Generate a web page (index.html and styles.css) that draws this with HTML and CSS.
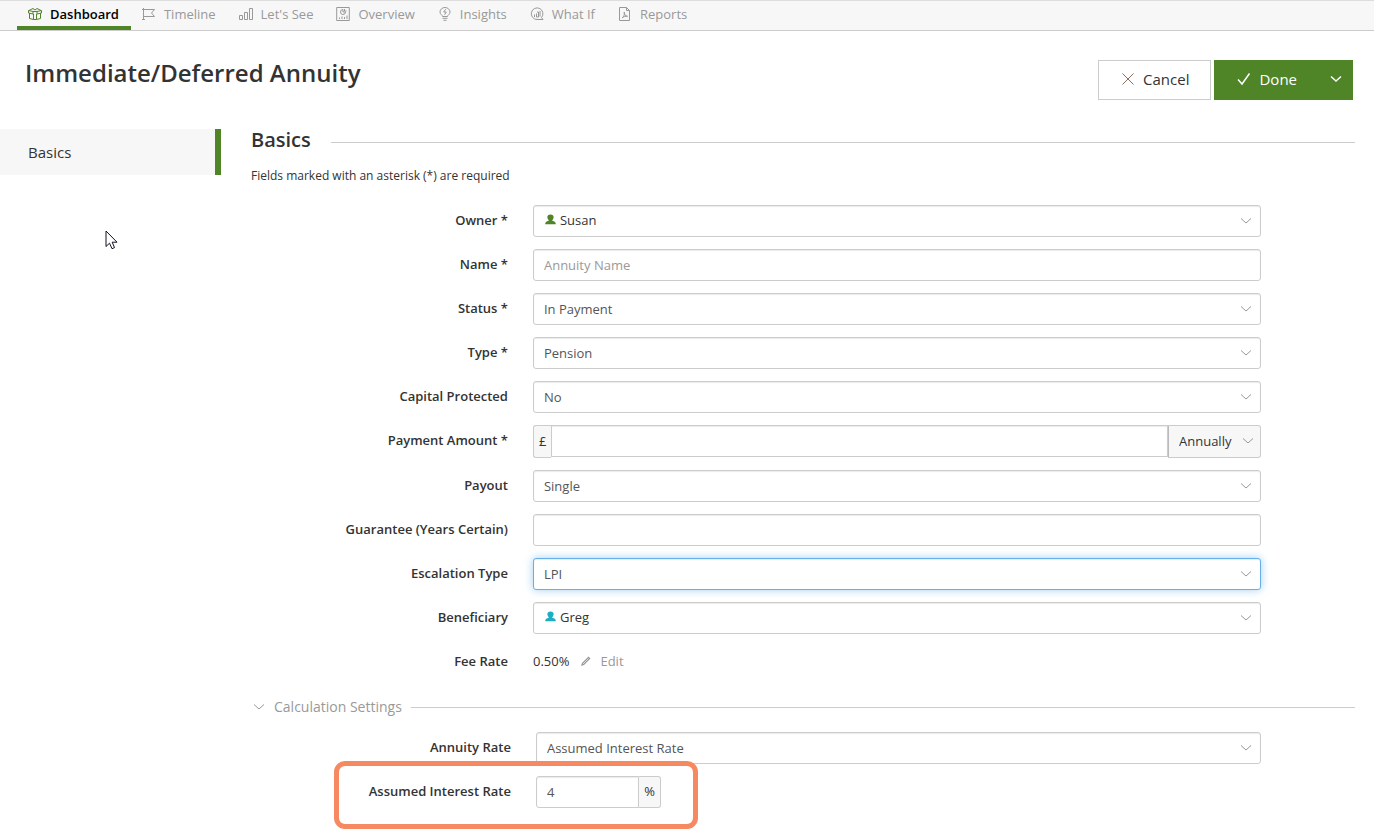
FILE: index.html
```html
<!DOCTYPE html>
<html lang="en">
<head>
    <meta charset="UTF-8">
    <meta name="viewport" content="width=device-width, initial-scale=1.0">
    <title>Immediate/Deferred Annuity</title>
    <link rel="stylesheet" href="styles.css">
</head>
<body>
    <svg class="sprite" aria-hidden="true">
        <symbol id="chevron" viewBox="0 0 12 8">
            <path d="M1 1.5 L6 6 L11 1.5"/>
        </symbol>
        <symbol id="person" viewBox="0 0 12 12">
            <path d="M6 0.5 C3.8 0.5 2.6 1.8 2.6 3.4 C2.6 4.8 3.2 6 4 6.6 V7.4 L1.8 8.1 C0.9 8.5 0.2 9.6 0.2 11.2 H11.8 C11.8 9.6 11.1 8.5 10.2 8.1 L8 7.4 V6.6 C8.8 6 9.4 4.8 9.4 3.4 C9.4 1.8 8.2 0.5 6 0.5 Z"/>
        </symbol>
    </svg>

    <nav class="tabs">
        <a href="#" class="tab active">
            <svg class="icon" viewBox="0 0 14 14"><path d="M1.5 6 V11.5 L5.5 12.5 H8.5 L12.5 11.5 V6 M0.5 3.5 L5 4.5 V7 L0.5 6 Z M13.5 3.5 L9 4.5 V7 L13.5 6 Z M5 4.5 H9 M5.5 7 V12.5 M8.5 7 V12.5 M1 3.5 L5 1.5 L7 3 L9 1.5 L13 3.5"/></svg>
            <span>Dashboard</span>
        </a>
        <a href="#" class="tab">
            <svg class="icon" viewBox="0 0 14 14"><path d="M1.5 1 V13 M0 2.5 H12.5 L9.5 6 L12.5 9.5 H1.5 M0 12.5 H3"/></svg>
            <span>Timeline</span>
        </a>
        <a href="#" class="tab">
            <svg class="icon" viewBox="0 0 14 14"><path d="M0.5 8.5 H3.5 V12.5 H0.5 Z M5.5 5.5 H8.5 V12.5 H5.5 Z M10.5 1.5 H13.5 V12.5 H10.5 Z"/></svg>
            <span>Let's See</span>
        </a>
        <a href="#" class="tab">
            <svg class="icon" viewBox="0 0 14 14"><path d="M0.7 0.5 H13.3 V13.5 H0.7 Z M7 2.5 A2.5 2.5 0 1 0 9.5 5 H7 Z M8.5 2 V4 H10.5 M3.5 10.5 V12 M6 9.5 V12 M8.5 10 V12 M11 8.5 V12"/></svg>
            <span>Overview</span>
        </a>
        <a href="#" class="tab">
            <svg class="icon" viewBox="0 0 14 14"><path d="M4.5 9.5 C4.5 8 2 7.5 2 5 A5 4.5 0 0 1 12 5 C12 7.5 9.5 8 9.5 9.5 Z M4.5 11.3 H9.5 M5.5 13.3 H8.5 M7.7 2.2 L5.7 5 H8.3 L6.5 7.8"/></svg>
            <span>Insights</span>
        </a>
        <a href="#" class="tab">
            <svg class="icon" viewBox="0 0 14 14"><path d="M7 12.5 A5.8 5.8 0 1 1 11.5 10.5 L13 12.5 Z M4.5 7.5 V10 M6.5 6.5 V10 H8.5 V5 H7 M10 4 V9.5"/></svg>
            <span>What If</span>
        </a>
        <a href="#" class="tab">
            <svg class="icon" viewBox="0 0 14 14"><path d="M1.5 0.5 H8.5 L11.5 3.5 V13.5 H1.5 Z M8.5 0.5 V3.5 H11.5 M4 11 C6 9.5 7 7 6.3 5 C5.5 7 7.5 9 9.5 9.3 C7.5 9 5 9.8 4 11"/></svg>
            <span>Reports</span>
        </a>
    </nav>

    <header class="page-header">
        <h1>Immediate/Deferred Annuity</h1>
        <div class="actions">
            <button type="button" class="btn cancel">
                <svg class="icon" viewBox="0 0 14 14"><path d="M1.5 1.5 L12.5 12.5 M12.5 1.5 L1.5 12.5"/></svg>
                <span>Cancel</span>
            </button>
            <div class="split">
                <button type="button" class="btn done">
                    <svg class="icon" viewBox="0 0 14 14"><path d="M1 7.5 L5 12 L12.5 1.5"/></svg>
                    <span>Done</span>
                </button>
                <button type="button" class="btn more" aria-label="More options">
                    <svg class="chevron"><use href="#chevron"/></svg>
                </button>
            </div>
        </div>
    </header>

    <div class="layout">
        <aside class="sidebar">
            <a href="#basics" class="side-link">Basics</a>
        </aside>

        <main class="content" id="basics">
            <h2 class="section-title">Basics</h2>
            <p class="hint">Fields marked with an asterisk (*) are required</p>

            <form class="form">
                <div class="row">
                    <label for="owner">Owner *</label>
                    <div class="control">
                        <select id="owner" class="field with-person"><option>Susan</option></select>
                        <svg class="person green"><use href="#person"/></svg>
                        <svg class="chevron"><use href="#chevron"/></svg>
                    </div>
                </div>
                <div class="row">
                    <label for="name">Name *</label>
                    <div class="control">
                        <input id="name" class="field" type="text" placeholder="Annuity Name">
                    </div>
                </div>
                <div class="row">
                    <label for="status">Status *</label>
                    <div class="control">
                        <select id="status" class="field"><option>In Payment</option></select>
                        <svg class="chevron"><use href="#chevron"/></svg>
                    </div>
                </div>
                <div class="row">
                    <label for="type">Type *</label>
                    <div class="control">
                        <select id="type" class="field"><option>Pension</option></select>
                        <svg class="chevron"><use href="#chevron"/></svg>
                    </div>
                </div>
                <div class="row">
                    <label for="capital">Capital Protected</label>
                    <div class="control">
                        <select id="capital" class="field"><option>No</option></select>
                        <svg class="chevron"><use href="#chevron"/></svg>
                    </div>
                </div>
                <div class="row">
                    <label for="amount">Payment Amount *</label>
                    <div class="control group amount">
                        <span class="addon before">£</span>
                        <input id="amount" class="field" type="text">
                        <div class="frequency">
                            <select class="field" aria-label="Payment frequency"><option>Annually</option></select>
                            <svg class="chevron"><use href="#chevron"/></svg>
                        </div>
                    </div>
                </div>
                <div class="row">
                    <label for="payout">Payout</label>
                    <div class="control">
                        <select id="payout" class="field"><option>Single</option></select>
                        <svg class="chevron"><use href="#chevron"/></svg>
                    </div>
                </div>
                <div class="row">
                    <label for="guarantee">Guarantee (Years Certain)</label>
                    <div class="control">
                        <input id="guarantee" class="field" type="text">
                    </div>
                </div>
                <div class="row">
                    <label for="escalation">Escalation Type</label>
                    <div class="control">
                        <select id="escalation" class="field focused"><option>LPI</option></select>
                        <svg class="chevron"><use href="#chevron"/></svg>
                    </div>
                </div>
                <div class="row">
                    <label for="beneficiary">Beneficiary</label>
                    <div class="control">
                        <select id="beneficiary" class="field with-person"><option>Greg</option></select>
                        <svg class="person blue"><use href="#person"/></svg>
                        <svg class="chevron"><use href="#chevron"/></svg>
                    </div>
                </div>
                <div class="row">
                    <span class="label">Fee Rate</span>
                    <div class="control fee">
                        <span>0.50%</span>
                        <a href="#" class="edit">
                            <svg viewBox="0 0 12 12"><path d="M1 11 L2 8 L8.5 1.5 L10.5 3.5 L4 10 Z"/><path class="shine" d="M3 9 L8.5 3.5"/></svg>
                            <span>Edit</span>
                        </a>
                    </div>
                </div>
            </form>

            <button type="button" class="toggle">
                <svg class="chevron"><use href="#chevron"/></svg>
                <span>Calculation Settings</span>
            </button>

            <form class="form settings">
                <div class="row">
                    <label for="annuity-rate">Annuity Rate</label>
                    <div class="control">
                        <select id="annuity-rate" class="field"><option>Assumed Interest Rate</option></select>
                        <svg class="chevron"><use href="#chevron"/></svg>
                    </div>
                </div>
                <div class="row">
                    <label for="interest-rate">Assumed Interest Rate</label>
                    <div class="control group rate">
                        <input id="interest-rate" class="field" type="text" value="4">
                        <span class="addon after">%</span>
                        <div class="callout"></div>
                    </div>
                </div>
            </form>
        </main>
    </div>

    <svg class="cursor" viewBox="0 0 13 20"><path d="M1 1 V16.5 L4.5 13.2 L7 18.7 L9.5 17.6 L7.2 12.2 H12 Z"/></svg>
</body>
</html>
```
FILE: styles.css
```css
*,*::before,*::after
{
    box-sizing: border-box;
}
body
{
    margin: 0;
    min-height: 100vh;
    font-family: "Open Sans", "Noto Sans", sans-serif;
    font-size: 13px;
    color: #333;
    background-color: #fff;
}
button, input, select
{
    font: inherit;
    color: inherit;
}
a
{
    color: inherit;
    text-decoration: none;
}
svg
{
    display: block;
    flex: none;
    fill: none;
    stroke: currentColor;
}
.sprite
{
    display: none;
}
.icon
{
    width: 14px;
    height: 14px;
}
.chevron
{
    width: 12px;
    height: 8px;
}

/* top tabs */
.tabs
{
    display: flex;
    height: 31px;
    padding-left: 17px;
    background-color: #f7f7f7;
    border-top: 1px solid #ddd;
    border-bottom: 1px solid #ccc;
}
.tab
{
    display: flex;
    align-items: center;
    gap: 8px;
    padding: 0 12px 0 11px;
    color: #999;
    border-bottom: 4px solid transparent;
}
.tab.active
{
    color: #000;
    font-weight: 600;
    border-bottom-color: #4f8427;
}
.tab.active .icon
{
    color: #4f8427;
}

/* title and buttons */
.page-header
{
    display: flex;
    justify-content: space-between;
    align-items: flex-start;
    padding: 29px 21px 29px 25px;
}
h1
{
    margin: 0;
    font-size: 24px;
    line-height: 26px;
    font-weight: 600;
}
.actions
{
    display: flex;
    gap: 3px;
}
.split
{
    display: flex;
}
.btn
{
    display: flex;
    align-items: center;
    gap: 8px;
    height: 40px;
    padding: 0 21px 2px 22px;
    font-size: 15px;
    border: 1px solid #ccc;
    background-color: #fff;
}
.cancel .icon
{
    color: #8a6d5a;
}
.done, .more
{
    color: #fff;
    background-color: #4f8427;
    border-color: #4f8427;
}
.done svg, .more svg
{
    stroke-width: 1.5;
}
.done
{
    padding-right: 23px;
    border-right: 0;
}
.more
{
    padding: 0 10px 2px;
    border-left: 0;
}

/* sidebar and content */
.layout
{
    display: flex;
    gap: 30px;
    padding-right: 19px;
}
.sidebar
{
    flex: 0 0 221px;
}
.side-link
{
    display: block;
    padding: 12px 28px;
    font-size: 15px;
    line-height: 22px;
    font-weight: 500;
    background-color: #f7f7f7;
    border-right: 6px solid #4f8427;
}
.content
{
    flex: 1;
    min-width: 0;
}
.section-title
{
    display: flex;
    align-items: center;
    gap: 20px;
    margin: 0;
    font-size: 20px;
    line-height: 22px;
    font-weight: 600;
}
.section-title::after, .toggle::after
{
    content: "";
    flex: 1;
    border-top: 1px solid #ccc;
}
.section-title::after
{
    margin-top: 4px;
}
.hint
{
    margin: 16px 0 20px;
    font-size: 12px;
    line-height: 18px;
}

/* form */
.form
{
    display: flex;
    flex-direction: column;
    gap: 12px;
    padding-right: 94px;
}
.row
{
    display: grid;
    grid-template-columns: 6fr 17fr;
    column-gap: 25px;
}
.row>label, .row>.label
{
    line-height: 30px;
    font-weight: 600;
    text-align: right;
}
.control
{
    position: relative;
    min-width: 0;
}
.field
{
    display: block;
    width: 100%;
    height: 32px;
    padding: 0 10px;
    color: #555;
    background-color: #fff;
    border: 1px solid #ccc;
    border-radius: 3px;
    box-shadow: inset 0 1px 1px rgba(0,0,0,0.08);
    appearance: none;
    outline: none;
}
.field::placeholder
{
    color: #999;
}
.field.focused
{
    border-color: #66afe9;
    box-shadow: inset 0 1px 1px rgba(0,0,0,0.08), 0 0 8px rgba(102,175,233,0.6);
}
.field.with-person
{
    padding-left: 26px;
    padding-bottom: 2px;
    color: #333;
}
.control .chevron
{
    position: absolute;
    top: 12px;
    right: 9px;
    color: #999;
    pointer-events: none;
}
.person
{
    position: absolute;
    top: 9px;
    left: 12px;
    width: 11px;
    height: 11px;
    fill: currentColor;
    stroke: none;
}
.person.green
{
    color: #4f8427;
}
.person.blue
{
    color: #1fadc5;
}

/* inputs with something attached */
.group
{
    display: flex;
}
.group>.field
{
    flex: 1;
    min-width: 0;
}
.addon
{
    display: flex;
    align-items: center;
    padding: 0 5px 2px;
    background-color: #f7f7f7;
    border: 1px solid #ccc;
}
.addon.before
{
    border-right: 0;
    border-radius: 3px 0 0 3px;
}
.addon.after
{
    border-left: 0;
    border-radius: 0 3px 3px 0;
}
.amount>.field
{
    border-radius: 0;
}
.frequency
{
    position: relative;
    flex: 0 0 93px;
}
.frequency .field
{
    height: 33px;
    padding-bottom: 2px;
    color: #333;
    background-color: #f7f7f7;
    border-left-color: #bbb;
    border-radius: 0 3px 3px 0;
    box-shadow: none;
}
.frequency .chevron
{
    right: 7px;
}
.rate
{
    width: 125px;
}
.rate>.field
{
    border-radius: 3px 0 0 3px;
}
.callout
{
    position: absolute;
    top: -15px;
    left: -202px;
    width: 364px;
    height: 68px;
    border: 5px solid #f68862;
    border-radius: 11px;
    pointer-events: none;
}
.fee
{
    display: flex;
    align-items: center;
    gap: 11px;
    line-height: 30px;
}
.edit
{
    display: flex;
    align-items: center;
    gap: 8px;
    color: #999;
}
.edit svg
{
    width: 12px;
    height: 12px;
    fill: currentColor;
    stroke: none;
}
.edit .shine
{
    stroke: #ddd;
}
.toggle
{
    display: flex;
    align-items: center;
    gap: 9px;
    width: 100%;
    margin: 21px 0 15px;
    padding: 0 0 0 2px;
    font-size: 14px;
    line-height: 20px;
    color: #999;
    background: none;
    border: 0;
}
.settings
{
    padding-left: 4px;
    padding-bottom: 22px;
}

/* mouse pointer */
.cursor
{
    position: absolute;
    top: 230px;
    left: 105px;
    width: 13px;
    height: 20px;
    fill: #fff;
    stroke: #112;
}
```
